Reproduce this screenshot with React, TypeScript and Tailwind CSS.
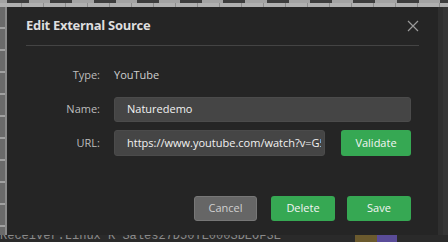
import React from "react";

function CloseIcon() {
  return (
    <svg width="12" height="12" viewBox="0 0 12 12" className="text-[#9a9a9a]">
      <path d="M1 1 L11 11 M11 1 L1 11" stroke="currentColor" strokeWidth="1.2" />
    </svg>
  );
}

export default function App() {
  return (
    <div
      className="w-[448px] h-[242px] overflow-hidden bg-[#2b2b2b] flex flex-col"
      style={{ fontFamily: '"Open Sans", "Noto Sans", sans-serif' }}
    >
      {/* backdrop: top tile strip */}
      <div className="h-[7px] shrink-0 bg-[#a3a3a3] bg-[repeating-linear-gradient(90deg,#a3a3a3_0px,#a3a3a3_7px,#3d3d3d_7px,#3d3d3d_29px,#a3a3a3_29px,#a3a3a3_43.3px)] flex flex-col">
        <div className="h-[3px]" />
        <div className="flex-1 bg-[repeating-linear-gradient(90deg,#b0b0b0_0px,#b0b0b0_21px,#8c8c8c_21px,#8c8c8c_22px)]" />
      </div>

      <div className="flex flex-1 min-h-0">
        {/* left tile strip */}
        <div className="w-[7px] shrink-0 flex">
          <div className="w-[5px] bg-[repeating-linear-gradient(180deg,#6a6a6a_0px,#6a6a6a_20px,#a0a0a0_20px,#a0a0a0_22px)]" />
          <div className="w-[2px] bg-[#8a8a8a]" />
        </div>

        {/* dialog */}
        <div className="w-[431px] h-[228px] shrink-0 bg-[#252525] px-[19px] flex flex-col">
          <div className="h-[39px] flex items-center justify-between border-b border-[#444444]">
            <span className="text-[13px] font-bold text-[#dedede] tracking-[-0.3px]">Edit External Source</span>
            <CloseIcon />
          </div>

          <div className="pr-[8px] pt-[19px] grid grid-cols-[74px_1fr] gap-x-[14px] text-[11px]">
            <div className="h-[20px] flex items-center justify-end text-[#bdbdbd]">Type:</div>
            <div className="h-[20px] flex items-center text-[#cfcfcf]">YouTube</div>

            <div className="mt-[12px] h-[25px] flex items-center justify-end text-[#bdbdbd]">Name:</div>
            <div className="mt-[12px] h-[25px] rounded-[3px] bg-[#454545] border border-[#4b4b4b] flex items-center px-[12px] text-[#f2f2f2]">
              Naturedemo
            </div>

            <div className="mt-[8px] h-[26px] flex items-center justify-end text-[#bdbdbd]">URL:</div>
            <div className="mt-[8px] h-[26px] flex gap-[16px]">
              <div className="w-[211px] rounded-[3px] bg-[#454545] border border-[#4b4b4b] flex items-center pl-[12px] pr-[3px] text-[#f2f2f2] overflow-hidden">
                <span className="block overflow-hidden whitespace-nowrap">https://www.youtube.com/watch?v=G52</span>
              </div>
              <button className="flex-1 rounded-[3px] bg-[#36a853] text-[#f4f4f4]">Validate</button>
            </div>
          </div>

          <div className="mt-auto mb-[14px] pr-[8px] flex justify-end text-[11px]">
            <button className="w-[63px] h-[25px] rounded-[3px] bg-[#666666] border border-[#777777] text-[#d0d0d0]">Cancel</button>
            <button className="ml-[14px] w-[64px] h-[25px] rounded-[3px] bg-[#36a853] text-[#f4f4f4]">Delete</button>
            <button className="ml-[12px] w-[64px] h-[25px] rounded-[3px] bg-[#36a853] text-[#f4f4f4]">Save</button>
          </div>
        </div>

        {/* right strip */}
        <div className="flex-1 flex">
          <div className="w-[5px] bg-[#2f2f2f]" />
          <div className="flex-1 bg-[#353535]" />
        </div>
      </div>

      {/* bottom log strip */}
      <div className="h-[7px] shrink-0 overflow-hidden bg-[#2a2a2a] flex">
        <div
          className="w-[355px] shrink-0 -mt-[6px] leading-[14px] text-[12px] text-[#8a8a8a] whitespace-nowrap overflow-hidden"
          style={{ fontFamily: '"Liberation Mono", monospace' }}
        >
          Receiver.Linux K Sales27D50TE000SDEOF3E
        </div>
        <div className="w-[22px] bg-[#6b5a2e]" />
        <div className="w-[20px] bg-[#5a4c98]" />
        <div className="flex-1 bg-[#2a2a2a]" />
      </div>
    </div>
  );
}
